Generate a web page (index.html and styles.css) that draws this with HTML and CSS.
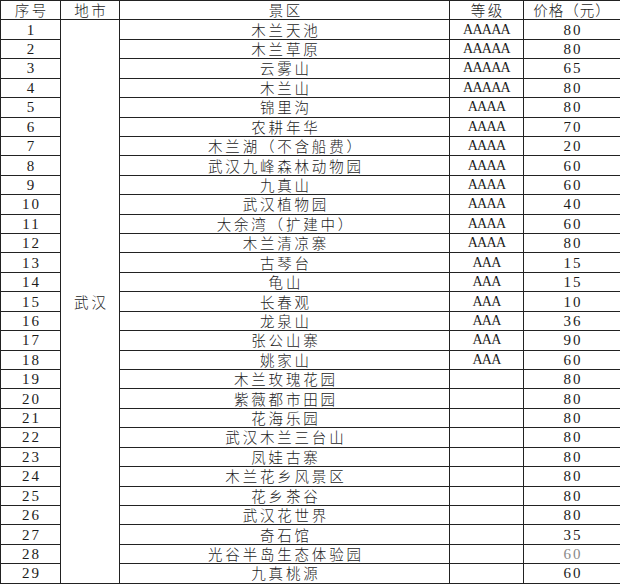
FILE: index.html
```html
<!DOCTYPE html>
<html lang="zh-CN">
<head>
<meta charset="utf-8">
<title>武汉景区</title>
<link rel="stylesheet" href="styles.css">
</head>
<body>
<table class="sheet">
  <colgroup>
    <col class="c-no"><col class="c-city"><col class="c-name"><col class="c-grade"><col class="c-price">
  </colgroup>
  <thead>
    <tr><th>序号</th><th>地市</th><th>景区</th><th>等级</th><th class="hd-price">价格（元）</th></tr>
  </thead>
  <tbody>
    <tr><td class="num">1</td><td class="city" rowspan="29">武汉</td><td class="name">木兰天池</td><td class="grade">AAAAA</td><td class="num">80</td></tr>
    <tr><td class="num">2</td><td class="name">木兰草原</td><td class="grade">AAAAA</td><td class="num">80</td></tr>
    <tr><td class="num">3</td><td class="name">云雾山</td><td class="grade">AAAAA</td><td class="num">65</td></tr>
    <tr><td class="num">4</td><td class="name">木兰山</td><td class="grade">AAAAA</td><td class="num">80</td></tr>
    <tr><td class="num">5</td><td class="name">锦里沟</td><td class="grade">AAAA</td><td class="num">80</td></tr>
    <tr><td class="num">6</td><td class="name">农耕年华</td><td class="grade">AAAA</td><td class="num">70</td></tr>
    <tr><td class="num">7</td><td class="name">木兰湖（不含船费）</td><td class="grade">AAAA</td><td class="num">20</td></tr>
    <tr><td class="num">8</td><td class="name">武汉九峰森林动物园</td><td class="grade">AAAA</td><td class="num">60</td></tr>
    <tr><td class="num">9</td><td class="name">九真山</td><td class="grade">AAAA</td><td class="num">60</td></tr>
    <tr><td class="num">10</td><td class="name">武汉植物园</td><td class="grade">AAAA</td><td class="num">40</td></tr>
    <tr><td class="num">11</td><td class="name">大余湾（扩建中）</td><td class="grade">AAAA</td><td class="num">60</td></tr>
    <tr><td class="num">12</td><td class="name">木兰清凉寨</td><td class="grade">AAAA</td><td class="num">80</td></tr>
    <tr><td class="num">13</td><td class="name">古琴台</td><td class="grade">AAA</td><td class="num">15</td></tr>
    <tr><td class="num">14</td><td class="name">龟山</td><td class="grade">AAA</td><td class="num">15</td></tr>
    <tr><td class="num">15</td><td class="name">长春观</td><td class="grade">AAA</td><td class="num">10</td></tr>
    <tr><td class="num">16</td><td class="name">龙泉山</td><td class="grade">AAA</td><td class="num">36</td></tr>
    <tr><td class="num">17</td><td class="name">张公山寨</td><td class="grade">AAA</td><td class="num">90</td></tr>
    <tr><td class="num">18</td><td class="name">姚家山</td><td class="grade">AAA</td><td class="num">60</td></tr>
    <tr><td class="num">19</td><td class="name">木兰玫瑰花园</td><td class="grade"></td><td class="num">80</td></tr>
    <tr><td class="num">20</td><td class="name">紫薇都市田园</td><td class="grade"></td><td class="num">80</td></tr>
    <tr><td class="num">21</td><td class="name">花海乐园</td><td class="grade"></td><td class="num">80</td></tr>
    <tr><td class="num">22</td><td class="name">武汉木兰三台山</td><td class="grade"></td><td class="num">80</td></tr>
    <tr><td class="num">23</td><td class="name">凤娃古寨</td><td class="grade"></td><td class="num">80</td></tr>
    <tr><td class="num">24</td><td class="name">木兰花乡风景区</td><td class="grade"></td><td class="num">80</td></tr>
    <tr><td class="num">25</td><td class="name">花乡茶谷</td><td class="grade"></td><td class="num">80</td></tr>
    <tr><td class="num">26</td><td class="name">武汉花世界</td><td class="grade"></td><td class="num">80</td></tr>
    <tr><td class="num">27</td><td class="name">奇石馆</td><td class="grade"></td><td class="num">35</td></tr>
    <tr><td class="num">28</td><td class="name">光谷半岛生态体验园</td><td class="grade"></td><td class="num faded">60</td></tr>
    <tr><td class="num">29</td><td class="name">九真桃源</td><td class="grade"></td><td class="num">60</td></tr>
  </tbody>
</table>
</body>
</html>
```
FILE: styles.css
```css
html, body {
  margin: 0;
  padding: 0;
  background: #ffffff;
}

.sheet {
  border-collapse: collapse;
  table-layout: fixed;
  width: 620px;
  color: #1c1c1c;
  font-family: "Liberation Serif", "Noto Sans CJK SC", serif;
}

.c-no { width: 60px; }
.c-city { width: 59px; }
.c-name { width: 330px; }
.c-grade { width: 74px; }
.c-price { width: 97px; }

.sheet th,
.sheet td {
  border: 1px solid #222222;
  padding: 0;
  height: 18.43px;
  text-align: center;
  vertical-align: middle;
  line-height: 18px;
  white-space: nowrap;
  overflow: hidden;
}

.sheet th {
  font-family: "Noto Sans CJK SC", sans-serif;
  font-weight: 300;
  font-size: 14.5px;
  letter-spacing: 2.5px;
  text-indent: 2.5px;
}

.sheet .hd-price {
  letter-spacing: 1px;
  text-indent: 0;
}

.num {
  font-family: "Liberation Serif", serif;
  font-size: 15px;
  letter-spacing: 2px;
  text-indent: 2px;
}

.faded {
  color: #8a8a8a;
}

.city,
.name {
  font-family: "Noto Sans CJK SC", sans-serif;
  font-weight: 300;
  font-size: 14.5px;
  letter-spacing: 2.8px;
  text-indent: 2.8px;
}

.grade {
  font-family: "Liberation Serif", serif;
  font-size: 14px;
  letter-spacing: -0.7px;
}
```
